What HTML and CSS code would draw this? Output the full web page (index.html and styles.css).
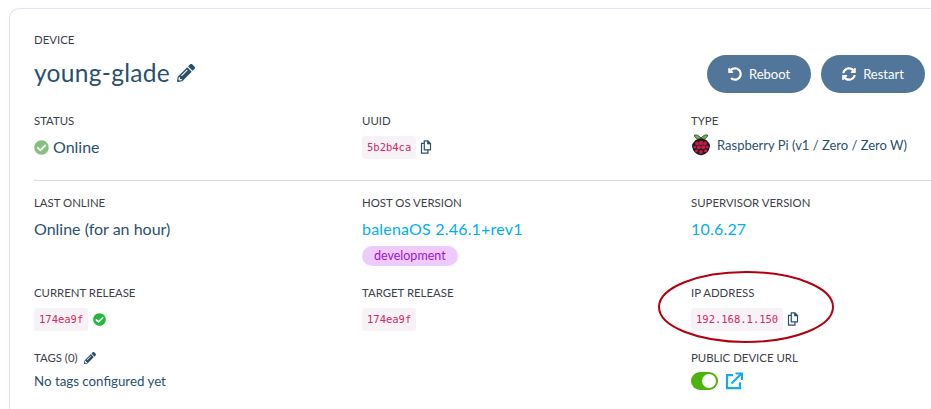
FILE: index.html
```html
<!DOCTYPE html>
<html lang="en">
<head>
    <meta charset="UTF-8">
    <meta name="viewport" content="width=device-width, initial-scale=1.0">
    <title>Device summary</title>
    <link rel="stylesheet" href="styles.css">
</head>
<body>
    <svg width="0" height="0" class="defs">
        <symbol id="pencil" viewBox="0 0 512 512"><path d="M497.9 142.1l-46.1 46.1c-4.700 4.700-12.300 4.700-17 0l-111-111c-4.700-4.700-4.700-12.300 0-17l46.100-46.100c18.700-18.700 49.100-18.700 67.900 0l60.100 60.100c18.800 18.700 18.800 49.100 0 67.900zM284.200 99.800L21.600 362.400.4 483.900c-2.900 16.400 11.400 30.600 27.800 27.800l121.500-21.300 262.600-262.600c4.700-4.700 4.700-12.300 0-17l-111-111c-4.800-4.700-12.400-4.700-17.100 0zM124.100 339.900c-5.500-5.500-5.500-14.300 0-19.800l154-154c5.500-5.500 14.300-5.500 19.800 0s5.500 14.300 0 19.800l-154 154c-5.500 5.500-14.300 5.500-19.800 0zM88 424h48v36.300l-64.500 11.300-31.100-31.100L51.700 376H88v48z"/></symbol>
        <symbol id="copy" viewBox="0 0 14 16"><path d="M5 .75h4.200L12.250 3.800v7.450H5z M9 .75V4h3.250" fill="none" stroke="currentColor" stroke-width="1.400"/><path d="M5 3.750H1.750v11.500h7.500v-4" fill="none" stroke="currentColor" stroke-width="1.400"/></symbol>
        <symbol id="check" viewBox="0 0 512 512"><path d="M504 256c0 137-111 248-248 248S8 393 8 256 119 8 256 8s248 111 248 248zM227.300 387.300l184-184c6.200-6.200 6.200-16.400 0-22.600l-22.600-22.600c-6.200-6.200-16.400-6.200-22.600 0L216 308.100l-70.100-70.100c-6.200-6.200-16.400-6.200-22.600 0l-22.600 22.600c-6.200 6.200-6.200 16.400 0 22.600l104 104c6.200 6.300 16.400 6.300 22.600.1z"/></symbol>
    </svg>

    <main class="card">
        <header class="card-head">
            <div>
                <div class="label">DEVICE</div>
                <h1 class="device-name">young-glade <svg class="icon-pencil"><use href="#pencil"/></svg></h1>
            </div>
            <div class="actions">
                <button class="action-button">
                    <svg width="14" height="14" viewBox="0 0 512 512" fill="currentColor"><path d="M255.500 8c-66.300.1-126.400 26.300-170.800 68.900L48.900 41.100C33.800 26 8 36.700 8 58.100V192c0 13.300 10.700 24 24 24h133.900c21.400 0 32.100-25.800 17-41l-41.700-41.700c30.800-28.800 70.700-44.800 113.100-45.200 92.300-.8 170.100 73.900 169.300 169.200C423.800 352 347.900 424 256 424c-40.300 0-78.400-14.400-108.400-40.700-4.700-4.100-11.900-3.900-16.300.6l-39.700 39.700c-4.900 4.900-4.600 12.800.5 17.400C136 479.200 193.100 504 256 504c137 0 248-111 248-248C504 119.200 392.600 7.800 255.500 8z"/></svg>
                    Reboot
                </button>
                <button class="action-button">
                    <svg width="14" height="14" viewBox="0 0 512 512" fill="currentColor"><path d="M370.700 133.300C339.500 104 298.900 88 255.800 88c-77.500.1-144.300 53.200-162.800 126.900-1.300 5.400-6.100 9.200-11.700 9.200H24.100c-7.500 0-13.200-6.800-11.800-14.200C33.900 94.900 134.800 8 256 8c66.400 0 126.800 26.100 171.300 68.700L463 41c15.100-15.100 41-4.400 41 17V192c0 13.300-10.700 24-24 24H346c-21.400 0-32.100-25.900-17-41l41.700-41.700zM32 296h134c21.400 0 32.100 25.900 17 41l-41.700 41.700c31.200 29.300 71.800 45.300 114.900 45.300 77.400-.1 144.300-53.100 162.800-126.800 1.300-5.400 6.100-9.200 11.700-9.200h57.300c7.500 0 13.200 6.800 11.800 14.200C478.100 417.100 377.200 504 256 504c-66.400 0-126.800-26.100-171.300-68.700L49 471c-15.100 15.100-41 4.400-41-17V320c0-13.300 10.700-24 24-24z"/></svg>
                    Restart
                </button>
            </div>
        </header>

        <section class="fields fields-top">
            <div class="field">
                <div class="label">STATUS</div>
                <div class="value"><svg class="icon-status"><use href="#check"/></svg> Online</div>
            </div>
            <div class="field">
                <div class="label">UUID</div>
                <div class="value-row"><code class="hash">5b2b4ca</code><svg class="icon-copy"><use href="#copy"/></svg></div>
            </div>
            <div class="field">
                <div class="label">TYPE</div>
                <div class="value value-type">
                    <svg class="icon-pi" viewBox="0 0 20 22">
                        <path d="M10 4C8 1.500 5 .5 3.500 1 3 3 6 5 8 5.500zM10 4c2-2.500 5-3.500 6.500-3 .5 2-2.500 4-4.500 4.500z" fill="#6cc04a" stroke="#222" stroke-width=".8"/>
                        <path d="M10 4.500c3 0 6 1.500 7 3.500 2 1.500 2.500 4 1.500 6-.5 3-3 5.500-5.500 6.500-2 1-4 1-6 0-2.500-1-5-3.500-5.500-6.500-1-2-.5-4.500 1.500-6 1-2 4-3.500 7-3.500z" fill="#1c1c1c"/>
                        <g fill="#c51a4a"><circle cx="10" cy="9" r="2.200"/><circle cx="6" cy="9.500" r="1.900"/><circle cx="14" cy="9.500" r="1.900"/><circle cx="3.800" cy="13" r="1.500"/><circle cx="16.200" cy="13" r="1.500"/><circle cx="7.800" cy="13.300" r="2.100"/><circle cx="12.200" cy="13.300" r="2.100"/><circle cx="5.500" cy="16.800" r="1.500"/><circle cx="14.500" cy="16.800" r="1.500"/><circle cx="10" cy="18" r="1.900"/></g>
                    </svg>
                    Raspberry Pi (v1 / Zero / Zero W)
                </div>
            </div>
        </section>

        <hr class="divider">

        <section class="fields">
            <div class="field field-online">
                <div class="label">LAST ONLINE</div>
                <div class="value">Online (for an hour)</div>
            </div>
            <div class="field field-online">
                <div class="label">HOST OS VERSION</div>
                <a class="value link">balenaOS 2.46.1+rev1</a>
                <span class="pill">development</span>
            </div>
            <div class="field field-online">
                <div class="label">SUPERVISOR VERSION</div>
                <a class="value link">10.6.27</a>
            </div>

            <div class="field field-release">
                <div class="label">CURRENT RELEASE</div>
                <div class="value-row"><code class="hash">174ea9f</code><svg class="icon-ok"><use href="#check"/></svg></div>
            </div>
            <div class="field field-release">
                <div class="label">TARGET RELEASE</div>
                <div class="value-row"><code class="hash">174ea9f</code></div>
            </div>
            <div class="field field-release">
                <div class="label">IP ADDRESS</div>
                <div class="value-row"><code class="hash">192.168.1.150</code><svg class="icon-copy"><use href="#copy"/></svg></div>
            </div>

            <div class="field">
                <div class="label">TAGS (0) <svg class="icon-pencil-small"><use href="#pencil"/></svg></div>
                <div class="tags-empty">No tags configured yet</div>
            </div>
            <div class="field"></div>
            <div class="field">
                <div class="label">PUBLIC DEVICE URL</div>
                <div class="value-row value-row-url">
                    <span class="toggle"><span class="toggle-knob"></span></span>
                    <svg class="icon-open" viewBox="0 0 18 18" fill="none" stroke="currentColor" stroke-width="2.200"><path d="M8 3.200H2v13h13v-6"/><path d="M6.500 11.500L16 2"/><path d="M10.500 1.500h6.500v6.500" stroke-width="2"/></svg>
                </div>
            </div>
        </section>
    </main>

    <svg class="annotation" viewBox="0 0 178 74" fill="none"><ellipse cx="89" cy="37" rx="87" ry="35" stroke="#b3000f" stroke-width="2"/></svg>
</body>
</html>
```

FILE: styles.css
```css
html, body {
    height: 100%;
}

body {
    margin: 0;
    font-family: "Lato", "Noto Sans", sans-serif;
    color: #2a506f;
    background-color: #fff;
    overflow: hidden;
    position: relative;
}

.defs {
    position: absolute;
}

/* the screenshot cuts the card off on the right and at the bottom */
.card {
    height: 401px;
    box-sizing: border-box;
    margin: 8px 0 0 9px;
    padding: 23px 0 0 24px;
    border: 1px solid #e0e3f2;
    border-right: none;
    border-bottom: none;
    border-top-left-radius: 10px;
}

.card-head {
    display: flex;
    justify-content: space-between;
    width: 891px;
    height: 81px;
}

.label {
    font-size: 11.400px;
    line-height: 16px;
    color: #3c3e4a;
    display: flex;
    align-items: center;
    gap: 6px;
}

.device-name {
    margin: 8px 0 0;
    font-size: 24.500px;
    line-height: 34px;
    font-weight: 400;
    letter-spacing: 0.3px;
    display: flex;
    align-items: center;
    gap: 7px;
}

.icon-pencil {
    width: 18px;
    height: 18px;
    fill: #2a506f;
}

.actions {
    display: flex;
    gap: 10px;
    margin-top: 23px;
}

.action-button {
    width: 104px;
    height: 38px;
    border: none;
    border-radius: 19px;
    background-color: #527699;
    color: #fff;
    font-family: inherit;
    font-size: 13px;
    display: flex;
    align-items: center;
    justify-content: center;
    gap: 7px;
}

.fields {
    display: grid;
    grid-template-columns: 328px 329px auto;
}

.fields-top {
    height: 67px;
}

.value {
    margin-top: 8px;
    font-size: 16px;
    line-height: 20px;
    display: flex;
    align-items: center;
    gap: 4px;
}

.value-type {
    font-size: 13px;
    margin-top: 5px;
    gap: 6px;
}

.value-row {
    margin-top: 7px;
    display: flex;
    align-items: center;
    gap: 4px;
}

.value-row-url {
    margin-top: 6px;
}

.hash {
    font-family: "DejaVu Sans Mono", "Liberation Mono", monospace;
    font-size: 10.500px;
    line-height: 23px;
    padding: 0 5px;
    border-radius: 3px;
    background-color: #f7f2f5;
    color: #cf2a62;
}

.icon-copy {
    width: 12px;
    height: 14px;
    margin-top: -1px;
    color: #2a506f;
}

.icon-status {
    width: 15px;
    height: 15px;
    fill: #85c17e;
}

.icon-ok {
    width: 13px;
    height: 13px;
    fill: #1fba3a;
    margin-left: 1px;
}

.icon-pi {
    width: 20px;
    height: 22px;
}

.divider {
    border: none;
    border-top: 1px solid #d7d9de;
    margin: 0 0 14px;
}

.field-online {
    height: 90px;
}

.field-release {
    height: 65px;
}

.link {
    color: #00aeef;
    display: block;
    letter-spacing: 0.2px;
}

.pill {
    display: inline-block;
    margin-top: 7px;
    padding: 0 12px;
    border-radius: 10px;
    background-color: #efcbfd;
    color: #9a14d4;
    font-size: 12.500px;
    line-height: 20px;
}

.icon-pencil-small {
    width: 12px;
    height: 12px;
    fill: #2a506f;
}

.tags-empty {
    margin-top: 6px;
    font-size: 13.300px;
    line-height: 18px;
}

.toggle {
    width: 27px;
    height: 18px;
    border-radius: 9px;
    background-color: #4cb30c;
    display: flex;
    justify-content: flex-end;
    align-items: center;
    padding-right: 2px;
    box-sizing: border-box;
}

.toggle-knob {
    width: 14px;
    height: 14px;
    border-radius: 50%;
    background-color: #fff;
}

.icon-open {
    width: 18px;
    height: 18px;
    margin-left: 3px;
    color: #14a9f0;
}

.annotation {
    position: absolute;
    left: 657px;
    top: 270px;
    width: 178px;
    height: 74px;
}
```
